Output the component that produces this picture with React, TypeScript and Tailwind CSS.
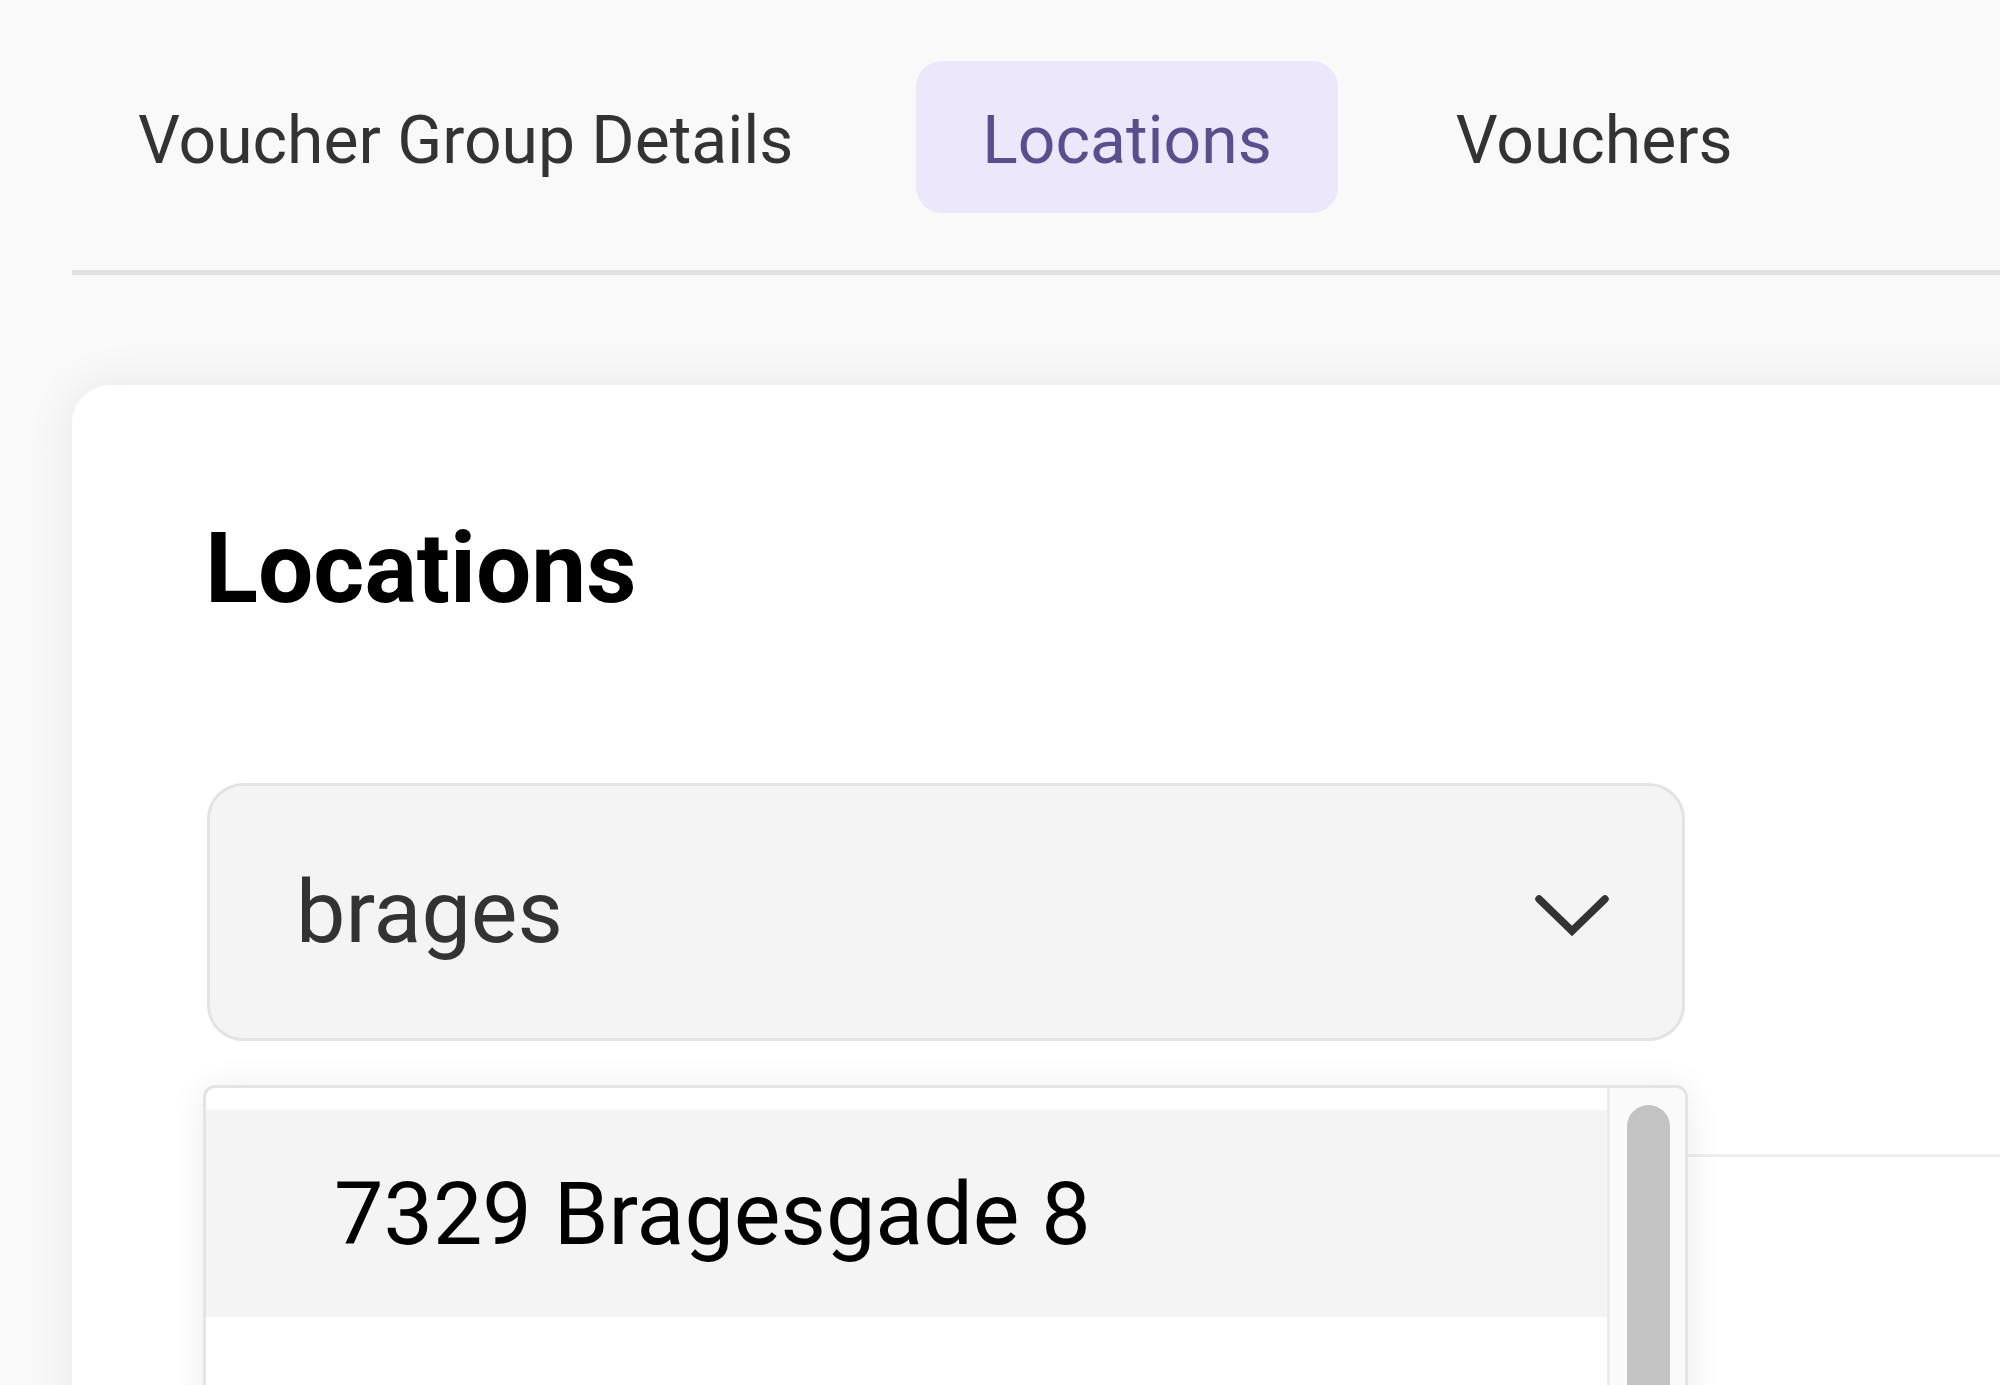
import React from "react";

export default function App() {
  return (
    <div className="w-[2000px] h-[1385px] overflow-hidden bg-[#f9f9f9] font-['Roboto',sans-serif]">
      <div className="pl-[72px] pt-[61px]">
        {/* Tabs */}
        <div className="flex">
          <div className="px-[66px] pt-[41px] pb-[34px] text-[66px] leading-[77px] text-[#333333] whitespace-nowrap">
            Voucher Group Details
          </div>
          <div className="ml-[57px] px-[66px] pt-[41px] pb-[34px] text-[66px] leading-[77px] text-[#5b4e8c] bg-[#ece7fa] rounded-[26px] whitespace-nowrap">
            Locations
          </div>
          <div className="ml-[52px] px-[66px] pt-[41px] pb-[34px] text-[66px] leading-[77px] text-[#333333] whitespace-nowrap">
            Vouchers
          </div>
        </div>
        {/* Divider */}
        <div className="mt-[57px] h-[5px] w-[2200px] bg-[#e2e2e2]" />

        {/* Card */}
        <div className="mt-[110px] w-[2200px] h-[1300px] rounded-[38px] bg-white shadow-[0_0_50px_rgba(0,0,0,0.075)] pl-[133px] pt-[135px]">
          <h1 className="text-[98px] leading-none font-bold text-black">Locations</h1>

          <div className="relative mt-[165px]">
            {/* Select input */}
            <div className="ml-[2px] w-[1478px] h-[258px] rounded-[36px] border-[3px] border-[#e3e3e3] bg-[#f4f4f4] flex items-center justify-between pl-[86px] pr-[72px]">
              <span className="text-[88px] text-[#333333]">brages</span>
              <svg width="76" height="44" viewBox="0 0 76 44" className="mt-[8px]">
                <polyline
                  points="5,5 38,37 71,5"
                  fill="none"
                  stroke="#333333"
                  strokeWidth="7.5"
                  strokeLinecap="round"
                  strokeLinejoin="miter"
                />
              </svg>
            </div>

            {/* Table header line behind */}
            <div className="h-[116px] w-[2100px] border-b-[3px] border-[#eeeeee]" />

            {/* Dropdown list */}
            <div className="absolute left-[-2px] top-[302px] w-[1485px] h-[420px] rounded-[12px] border-[3px] border-[#e4e4e4] bg-white shadow-[0_4px_36px_rgba(0,0,0,0.08)] flex overflow-hidden">
              <div className="flex-1 pt-[22px]">
                <div className="h-[207px] bg-[#f4f4f4] flex items-center pl-[128px] text-[88px] text-black whitespace-nowrap">
                  7329 Bragesgade 8
                </div>
              </div>
              <div className="w-[78px] border-l-[3px] border-[#ececec] bg-[#fafafa] pl-[17px] pt-[17px]">
                <div className="w-[43px] h-[600px] rounded-full bg-[#c3c3c3]" />
              </div>
            </div>
          </div>
        </div>
      </div>
    </div>
  );
}
